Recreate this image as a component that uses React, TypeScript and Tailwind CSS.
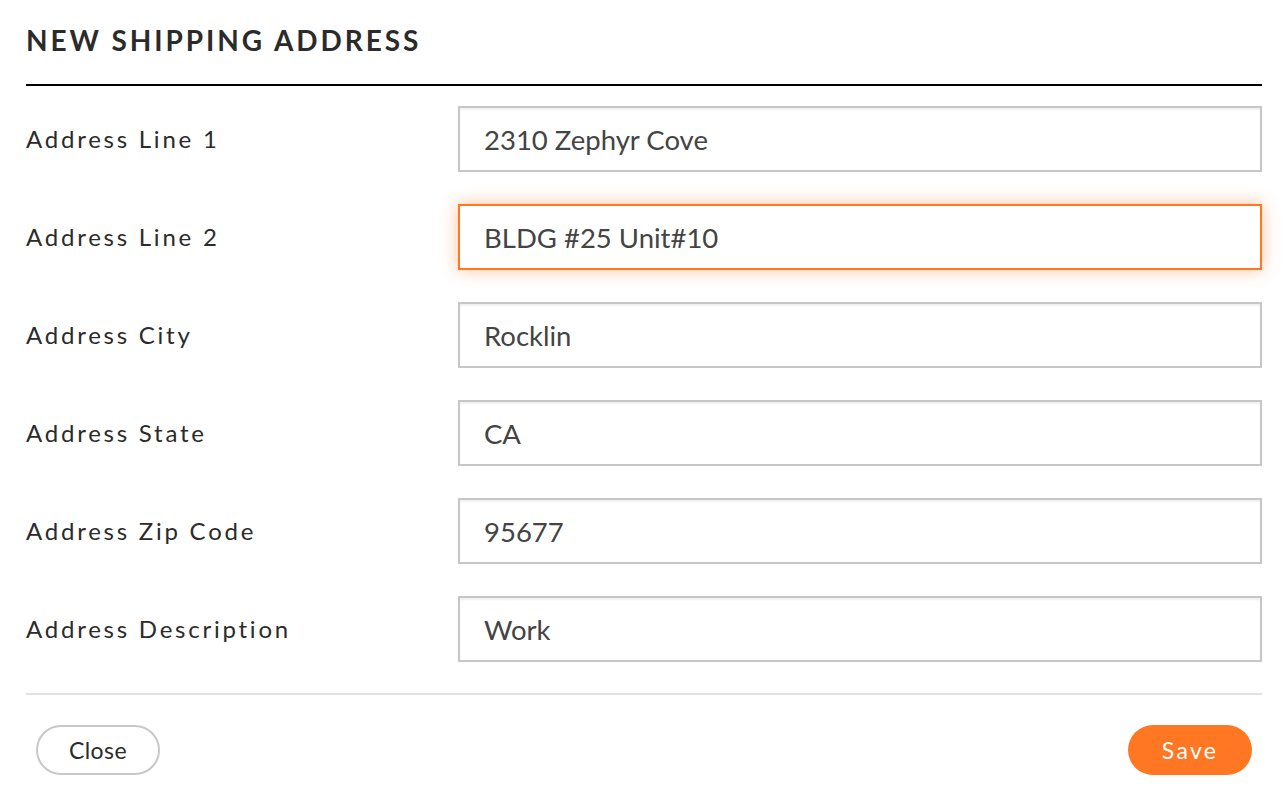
import { useState } from "react";

const fields = [
  { label: "Address Line 1", value: "2310 Zephyr Cove" },
  { label: "Address Line 2", value: "BLDG #25 Unit#10", focused: true },
  { label: "Address City", value: "Rocklin" },
  { label: "Address State", value: "CA" },
  { label: "Address Zip Code", value: "95677" },
  { label: "Address Description", value: "Work" },
];

export default function App() {
  const [values, setValues] = useState(fields.map((f) => f.value));

  return (
    <div className="min-h-screen bg-white font-['Lato','Open_Sans',sans-serif] text-[#2b2b2b]">
      <div className="ml-[26px] w-[1236px]">
        {/* Header */}
        <div className="box-border h-[86px] border-b-2 border-black pt-[26px]">
          <h1 className="text-[28px] font-bold leading-none tracking-[0.105em] text-[#2b2b2b]">
            NEW SHIPPING ADDRESS
          </h1>
        </div>

        {/* Form */}
        <div className="mt-[20px] flex flex-col gap-[32px]">
          {fields.map((f, i) => (
            <div key={f.label} className="flex items-center">
              <label className="w-[432px] shrink-0 text-[24px] leading-none tracking-[0.115em] text-[#2b2b2b]">
                {f.label}
              </label>
              <input
                value={values[i]}
                onChange={(e) =>
                  setValues((v) => v.map((x, j) => (j === i ? e.target.value : x)))
                }
                className={
                  f.focused
                    ? "box-border h-[66px] flex-1 border-2 border-[#ff7722] bg-white px-[24px] text-[27.5px] text-[#444] shadow-[0_0_16px_rgba(255,119,34,0.45)] outline-none"
                    : "box-border h-[66px] flex-1 border-2 border-[#c6c6c6] bg-white px-[24px] text-[27.5px] text-[#444] shadow-[inset_0_2px_2px_rgba(0,0,0,0.06)] outline-none"
                }
              />
            </div>
          ))}
        </div>

        {/* Footer */}
        <div className="mt-[31px] border-t-2 border-[#e0e0e0]" />
        <div className="flex items-center justify-between px-[10px] pt-[30px]">
          <button className="box-border h-[50px] w-[124px] rounded-full border-2 border-[#c8c8c8] bg-white text-[23px] tracking-[0.02em] text-[#2b2b2b]">
            Close
          </button>
          <button className="h-[50px] w-[124px] rounded-full bg-[#ff7722] text-[23px] tracking-[0.1em] text-white">
            Save
          </button>
        </div>
      </div>
    </div>
  );
}
